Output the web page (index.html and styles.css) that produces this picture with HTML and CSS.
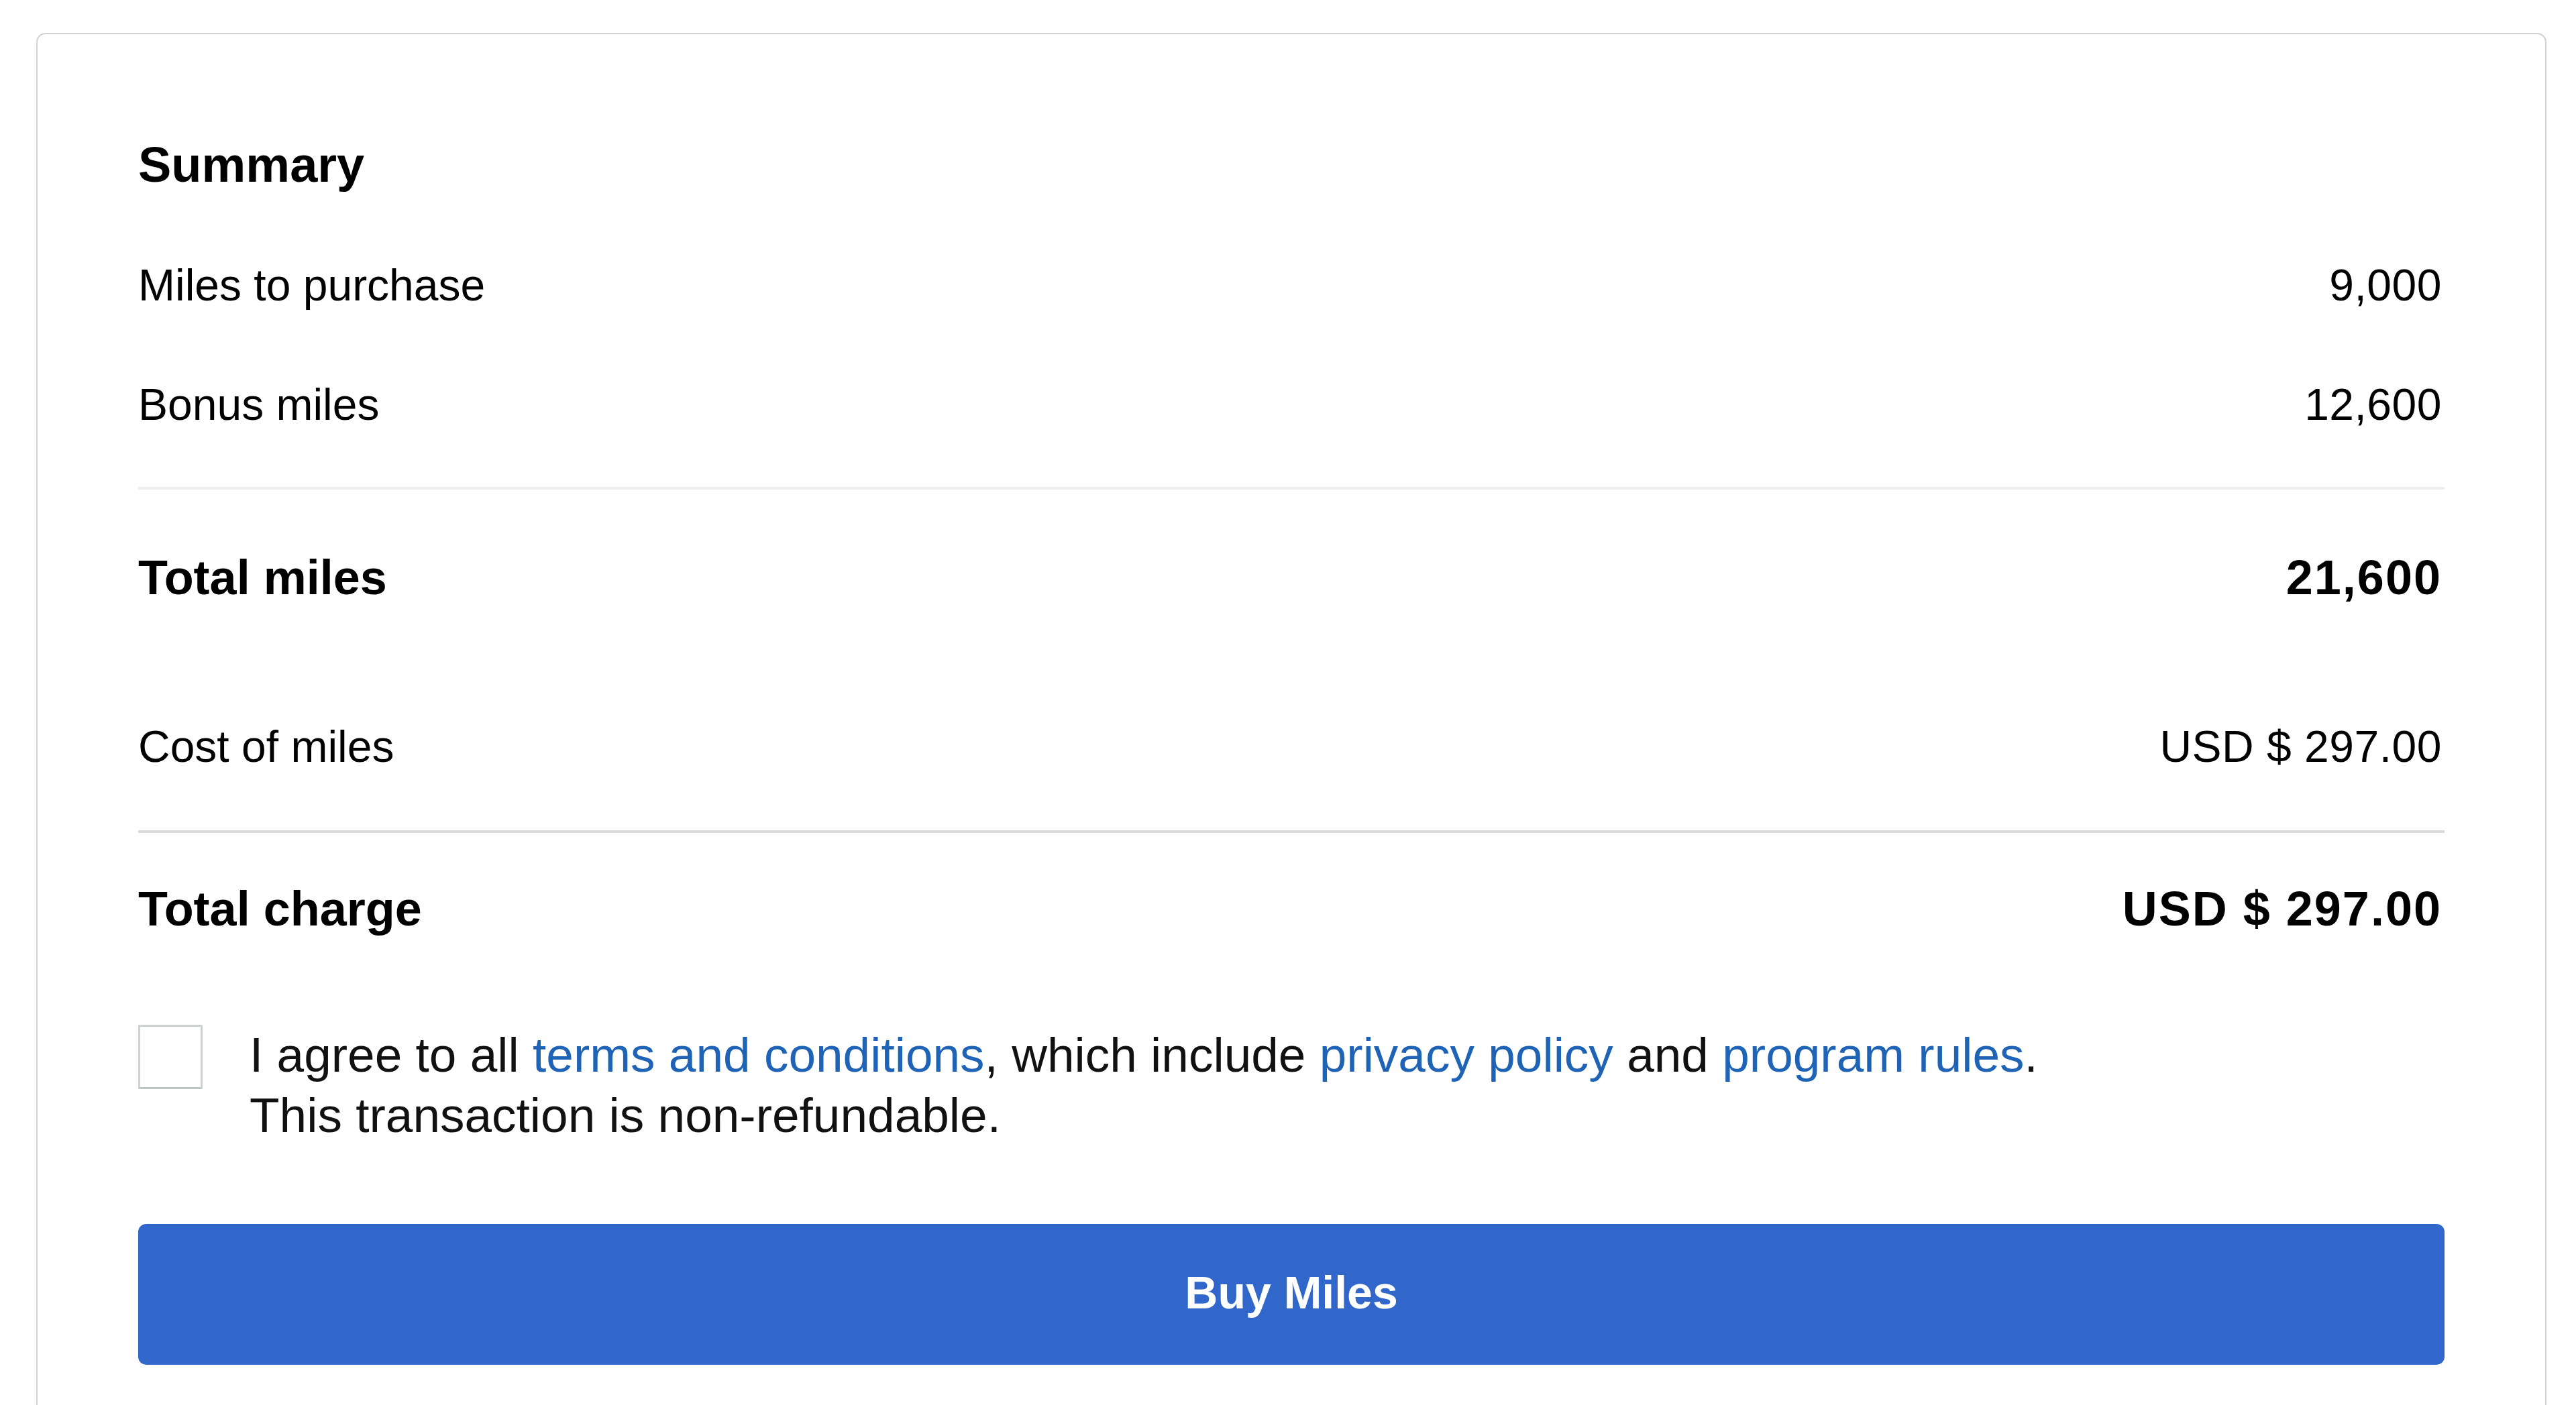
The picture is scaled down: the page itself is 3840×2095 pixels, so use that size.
FILE: index.html
```html
<!DOCTYPE html>
<html lang="en">
<head>
<meta charset="utf-8">
<title>Summary</title>
<link rel="stylesheet" href="styles.css">
</head>
<body>
<section class="card">
  <h2 class="card-title">Summary</h2>
  <div class="row row-first"><span>Miles to purchase</span><span class="value">9,000</span></div>
  <div class="row row-next"><span>Bonus miles</span><span class="value">12,600</span></div>
  <hr class="divider divider-light">
  <div class="row row-total row-total-miles"><span>Total miles</span><span class="value">21,600</span></div>
  <div class="row row-cost"><span>Cost of miles</span><span class="value">USD $ 297.00</span></div>
  <hr class="divider divider-dark">
  <div class="row row-total row-charge"><span>Total charge</span><span class="value">USD $ 297.00</span></div>
  <label class="agree">
    <input type="checkbox" class="checkbox">
    <span class="agree-text">I agree to all <a href="#" class="link">terms and conditions</a>, which include <a href="#" class="link">privacy policy</a> and <a href="#" class="link">program rules</a>.<br>This transaction is non-refundable.</span>
  </label>
  <button type="button" class="buy">Buy Miles</button>
</section>
</body>
</html>
```

FILE: styles.css
```css
body {
  margin: 0;
  background: #ffffff;
  font-family: "Liberation Sans", Arial, sans-serif;
  color: #000000;
}

.card {
  box-sizing: border-box;
  width: 3742px;
  margin: 49px 0 0 54px;
  border: 2px solid #d0d3d6;
  border-radius: 14px;
  padding: 150px 150px 300px;
}

.card-title {
  margin: 0;
  font-size: 74px;
  line-height: 90px;
  font-weight: 700;
}

.row {
  display: flex;
  justify-content: space-between;
  font-size: 66px;
  line-height: 80px;
}

.value {
  margin-right: 4px;
  letter-spacing: 0.5px;
}

.row-first { margin-top: 94px; }
.row-next { margin-top: 98px; }

.divider {
  border: 0;
  height: 4px;
  margin: 0;
}

.divider-light {
  margin-top: 83px;
  background: #ededed;
}

.divider-dark {
  margin-top: 85px;
  background: #dadada;
}

.row-total {
  font-size: 72px;
  line-height: 90px;
  font-weight: 700;
}

.row-total .value {
  letter-spacing: 2px;
}

.row-total-miles { margin-top: 86px; }
.row-cost { margin-top: 167px; }
.row-charge { margin-top: 68px; }

.agree {
  display: flex;
  align-items: flex-start;
  gap: 70px;
  margin-top: 128px;
  font-size: 73px;
  line-height: 90px;
}

.checkbox {
  appearance: none;
  -webkit-appearance: none;
  box-sizing: border-box;
  flex: 0 0 96px;
  width: 96px;
  height: 96px;
  margin: 0;
  border: 3px solid #cdd1d2;
  border-bottom-color: #bfc4c5;
  border-radius: 2px;
  background: #ffffff;
}

.agree-text {
  font-weight: 400;
  color: #111111;
}

.link {
  color: #1f63b6;
  text-decoration: none;
}

.buy {
  display: block;
  width: 100%;
  height: 210px;
  margin-top: 117px;
  padding: 0 0 6px;
  border: 0;
  border-radius: 12px;
  background: #3167cb;
  color: #ffffff;
  font-family: "Liberation Sans", Arial, sans-serif;
  font-size: 68px;
  font-weight: 700;
}
```
